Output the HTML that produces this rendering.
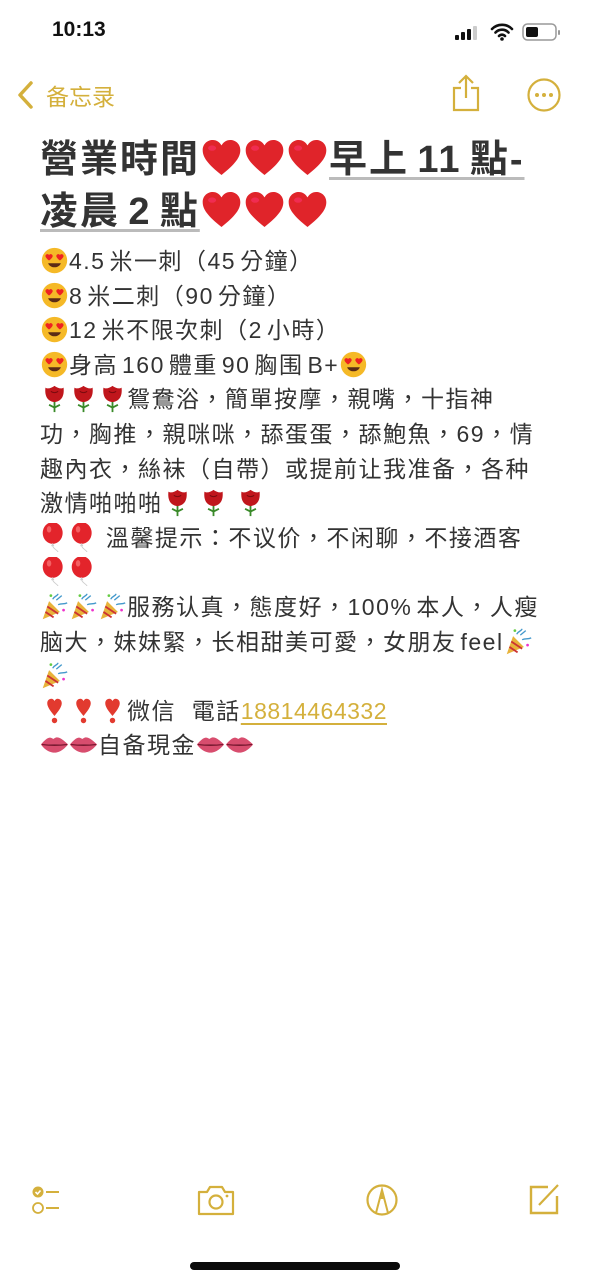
<!DOCTYPE html>
<html><head><meta charset="utf-8">
<style>
html,body{margin:0;padding:0;background:#fff;}
body{width:591px;height:1280px;position:relative;overflow:hidden;font-family:"Liberation Sans","Noto Sans CJK TC","Noto Sans CJK SC",sans-serif;color:#222;}
.abs{position:absolute;}
.time{left:52px;top:18px;font-size:21px;font-weight:bold;color:#111;}
.back{left:46px;top:78px;font-size:23px;color:#d4b03c;}
.title{left:40px;top:134px;font-size:38px;font-weight:bold;line-height:52px;color:#333;letter-spacing:2px;white-space:nowrap;}
.u{text-decoration:underline;text-decoration-color:#bbb;text-decoration-thickness:3px;text-underline-offset:5px;}
.body{left:40px;top:244px;font-size:23px;line-height:34.6px;color:#333;white-space:nowrap;letter-spacing:1.5px;}
svg.e{width:29px;height:29px;vertical-align:-6px;display:inline-block;}
svg.h{width:43px;height:43px;vertical-align:-7px;}
.link{color:#d4b03c;text-decoration:underline;text-decoration-color:#d4b03c;text-underline-offset:4px;letter-spacing:0.5px;}
.s{display:inline-block;width:4px;}
</style></head><body>
<svg width="0" height="0" style="position:absolute">
<defs>
<symbol id="heart" viewBox="0 0 32 32"><path d="M16 29C6 21 2 16 2 10.5 2 6 5.5 3 9.5 3c3 0 5 1.6 6.5 4 1.5-2.4 3.5-4 6.5-4C26.5 3 30 6 30 10.5 30 16 26 21 16 29z" fill="#e0242a"/><ellipse cx="9" cy="9" rx="3" ry="2" fill="#f37" opacity=".5"/></symbol>
<symbol id="face" viewBox="0 0 32 32"><circle cx="16" cy="16" r="14" fill="#f5b927"/><path d="M6 11c0-2 3-3 4-1 1-2 4-1 4 1 0 2-4 5-4 5s-4-3-4-5zM18 11c0-2 3-3 4-1 1-2 4-1 4 1 0 2-4 5-4 5s-4-3-4-5z" fill="#e22"/><path d="M9 19c2 6 12 6 14 0z" fill="#5a2b16"/></symbol>
<symbol id="rose" viewBox="0 0 32 32"><path d="M16 31V18" stroke="#3a8a2a" stroke-width="2"/><path d="M16 26l-6-3M16 26l6-3" stroke="#3a8a2a" stroke-width="2"/><path d="M6 4c3 2 7 0 10-2 3 2 7 4 10 2 1 9-2 15-10 16C8 19 5 13 6 4z" fill="#c0161c"/><path d="M12 8c2 2 6 2 8 0" stroke="#7a0a0e" fill="none"/></symbol>
<symbol id="balloon" viewBox="0 0 32 32"><ellipse cx="14" cy="11" rx="11" ry="12" fill="#e3242b"/><ellipse cx="10" cy="7" rx="2.5" ry="3.5" fill="#f88" opacity=".6"/><path d="M14 23l-1 2h2zM14 25c0 3 4 4 6 7" stroke="#ccc" fill="none"/></symbol>
<symbol id="party" viewBox="0 0 32 32"><path d="M3 30L10 10 22 22z" fill="#e8b33a"/><path d="M6 22l9 6M8 16l12 8" stroke="#c33" stroke-width="2"/><path d="M14 8c2-4 5-3 6-6M20 14c4-2 6 0 10-2M18 9l6-5" stroke="#49c" stroke-width="1.5" fill="none"/><circle cx="26" cy="20" r="1.5" fill="#e3c"/><circle cx="12" cy="4" r="1.5" fill="#6c4"/></symbol>
<symbol id="excl" viewBox="0 0 32 32"><path d="M16 22C10 15 8 11 8 8c0-3 2-5 4.5-5C14 3 15.3 4 16 5.5 16.7 4 18 3 19.5 3 22 3 24 5 24 8c0 3-2 7-8 14z" fill="#e23a2f"/><circle cx="16" cy="27" r="3" fill="#e23a2f"/></symbol>
<symbol id="lips" viewBox="0 0 32 32"><path d="M1 16C6 10 10 7 13 9c1.5 1 2.5 1 3 0 3-2 7-1 15 7-6 7-11 9-15 9S6 23 1 16z" fill="#d84d6e"/><path d="M2 16c8 1 20 1 28 0" stroke="#7a1830" stroke-width="1.5"/></symbol>
</defs></svg>

<div class="abs time">10:13</div>
<svg class="abs" style="left:455px;top:25px" width="28" height="16" viewBox="0 0 28 16"><rect x="0" y="10" width="4" height="5" rx="1" fill="#111"/><rect x="6" y="7" width="4" height="8" rx="1" fill="#111"/><rect x="12" y="4" width="4" height="11" rx="1" fill="#111"/><rect x="18" y="1" width="4" height="14" rx="1" fill="#ccc"/></svg>
<svg class="abs" style="left:490px;top:23px" width="24" height="18" viewBox="0 0 24 18"><path d="M2 6a14 14 0 0 1 20 0M5.5 9.5a9 9 0 0 1 13 0M9 13a4 4 0 0 1 6 0" stroke="#111" stroke-width="2.6" fill="none" stroke-linecap="round"/><circle cx="12" cy="16" r="1.8" fill="#111"/></svg>
<svg class="abs" style="left:522px;top:22px" width="40" height="20" viewBox="0 0 40 20"><rect x="1" y="2" width="33" height="16" rx="4.5" fill="none" stroke="#999" stroke-width="1.5"/><rect x="4" y="5" width="12" height="10" rx="2" fill="#111"/><rect x="36" y="8" width="2" height="5" rx="1" fill="#999"/></svg>

<svg class="abs" style="left:16px;top:80px" width="20" height="30" viewBox="0 0 20 30"><path d="M15 3L4 15l11 12" stroke="#d4b03c" stroke-width="3.5" fill="none" stroke-linecap="round" stroke-linejoin="round"/></svg>
<div class="abs back">备忘录</div>
<svg class="abs" style="left:450px;top:74px" width="32" height="38" viewBox="0 0 32 38"><path d="M11 14H4v22h24V14h-7" stroke="#d4b03c" stroke-width="2.2" fill="none"/><path d="M16 3v21M9 9l7-7 7 7" stroke="#d4b03c" stroke-width="2.2" fill="none"/></svg>
<svg class="abs" style="left:526px;top:77px" width="36" height="36" viewBox="0 0 36 36"><circle cx="18" cy="18" r="15.5" stroke="#d4b03c" stroke-width="2.2" fill="none"/><circle cx="11" cy="18" r="2" fill="#d4b03c"/><circle cx="18" cy="18" r="2" fill="#d4b03c"/><circle cx="25" cy="18" r="2" fill="#d4b03c"/></svg>

<div class="abs title">營業時間<svg class="e h"><use href="#heart"/></svg><svg class="e h"><use href="#heart"/></svg><svg class="e h"><use href="#heart"/></svg><span class="u">早上&#8198;11&#8198;點-</span><br><span class="u">凌晨&#8198;2&#8198;點</span><svg class="e h"><use href="#heart"/></svg><svg class="e h"><use href="#heart"/></svg><svg class="e h"><use href="#heart"/></svg></div>

<div class="abs body">
<svg class="e"><use href="#face"/></svg>4.5<span class="s"></span>米一刺（45<span class="s"></span>分鐘）<br>
<svg class="e"><use href="#face"/></svg>8<span class="s"></span>米二刺（90<span class="s"></span>分鐘）<br>
<svg class="e"><use href="#face"/></svg>12<span class="s"></span>米不限次刺（2<span class="s"></span>小時）<br>
<svg class="e"><use href="#face"/></svg>身高<span class="s"></span>160<span class="s"></span>體重<span class="s"></span>90<span class="s"></span>胸围<span class="s"></span>B+<svg class="e"><use href="#face"/></svg><br>
<svg class="e"><use href="#rose"/></svg><svg class="e"><use href="#rose"/></svg><svg class="e"><use href="#rose"/></svg>鴛鴦浴，簡單按摩，親嘴，十指神<br>
功，胸推，親咪咪，舔蛋蛋，舔鮑魚，69，情<br>
趣內衣，絲袜（自帶）或提前让我准备，各种<br>
激情啪啪啪<svg class="e"><use href="#rose"/></svg> <svg class="e"><use href="#rose"/></svg> <svg class="e"><use href="#rose"/></svg><br>
<svg class="e"><use href="#balloon"/></svg><svg class="e"><use href="#balloon"/></svg> 溫馨提示：不议价，不闲聊，不接酒客<br>
<svg class="e"><use href="#balloon"/></svg><svg class="e"><use href="#balloon"/></svg><br>
<svg class="e"><use href="#party"/></svg><svg class="e"><use href="#party"/></svg><svg class="e"><use href="#party"/></svg>服務认真，態度好，100%<span class="s"></span>本人，人瘦<br>
脑大，妹妹緊，长相甜美可愛，女朋友<span class="s"></span>feel<svg class="e"><use href="#party"/></svg><br>
<svg class="e"><use href="#party"/></svg><br>
<svg class="e"><use href="#excl"/></svg><svg class="e"><use href="#excl"/></svg><svg class="e"><use href="#excl"/></svg>微信&nbsp;&nbsp;電話<span class="link">18814464332</span><br>
<svg class="e"><use href="#lips"/></svg><svg class="e"><use href="#lips"/></svg>自备現金<svg class="e"><use href="#lips"/></svg><svg class="e"><use href="#lips"/></svg>
</div>

<svg class="abs" style="left:30px;top:1185px" width="40" height="32" viewBox="0 0 40 32"><circle cx="8" cy="7" r="5.5" fill="#d4b03c"/><path d="M5.5 7l2 2 3-3.5" stroke="#fff" stroke-width="1.6" fill="none"/><circle cx="8" cy="23" r="5" stroke="#d4b03c" stroke-width="1.8" fill="none"/><path d="M16 7h13M16 23h13" stroke="#d4b03c" stroke-width="2"/></svg>
<svg class="abs" style="left:196px;top:1183px" width="40" height="34" viewBox="0 0 40 34"><path d="M3 9h8l3-5h12l3 5h8v22H3z" stroke="#d4b03c" stroke-width="2.2" fill="none" stroke-linejoin="round"/><circle cx="20" cy="19" r="6.5" stroke="#d4b03c" stroke-width="2.2" fill="none"/><circle cx="31" cy="13" r="1.4" fill="#d4b03c"/></svg>
<svg class="abs" style="left:365px;top:1183px" width="34" height="34" viewBox="0 0 34 34"><circle cx="17" cy="17" r="14.5" stroke="#d4b03c" stroke-width="2.2" fill="none"/><path d="M11 30l6-23 6 23" stroke="#d4b03c" stroke-width="2" fill="none"/><path d="M14 16h6l-3-9z" fill="#d4b03c"/></svg>
<svg class="abs" style="left:528px;top:1182px" width="34" height="34" viewBox="0 0 34 34"><path d="M20 5H3v26h26V14" stroke="#d4b03c" stroke-width="2.4" fill="none"/><path d="M11 23L30 3" stroke="#d4b03c" stroke-width="2.2"/></svg>
<div class="abs" style="left:190px;top:1262px;width:210px;height:8px;border-radius:4px;background:#0a0a0a"></div>
</body></html>
